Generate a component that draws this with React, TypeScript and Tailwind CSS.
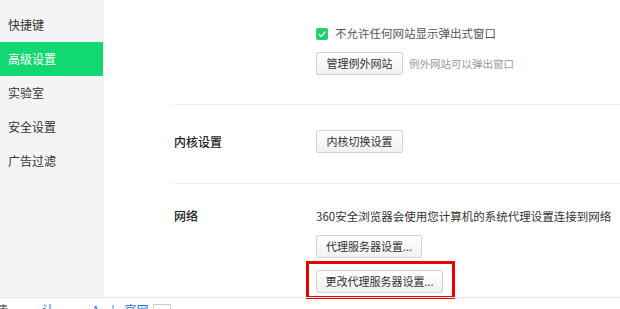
const FONT = { fontFamily: '"Microsoft YaHei", "Noto Sans CJK SC", "Noto Sans", sans-serif' };

const NAV = ["快捷键", "高级设置", "实验室", "安全设置", "广告过滤"];

function Btn({ label, w }: { label: string; w: string }) {
  return (
    <button
      className={`${w} h-[23px] shrink-0 rounded-[2px] border border-[#d3d3d3] bg-gradient-to-b from-white to-[#f1f1f1] text-center text-[11px] leading-[21px] text-[#333]`}
    >
      {label}
    </button>
  );
}

function CheckBox() {
  return (
    <span className="flex h-[12px] w-[12px] items-center justify-center rounded-[2px] bg-[#1fd26f]">
      <svg width="10" height="10" viewBox="0 0 10 10">
        <path d="M1.8 5.2 L4.2 7.4 L8.4 2.6" fill="none" stroke="#fff" strokeWidth="1.4" />
      </svg>
    </span>
  );
}

export default function App() {
  return (
    <div className="flex h-[309px] w-[620px] flex-col overflow-hidden bg-white" style={FONT}>
      <div className="flex h-[297px] shrink-0">
        {/* sidebar */}
        <div className="w-[104px] shrink-0 bg-[#f4f4f4] pt-[8px]">
          {NAV.map((item, i) => (
            <div
              key={item}
              className={
                i === 1
                  ? "mr-[1px] flex h-[34px] items-center bg-[#12d872] pl-[8px] text-[12px] text-white"
                  : "flex h-[34px] items-center pl-[8px] text-[12px] text-[#333]"
              }
            >
              {item}
            </div>
          ))}
        </div>

        {/* main */}
        <div className="flex-1 pl-[70px]">
          <div className="flex border-b border-[#eeeeee] pb-[29px] pt-[26px]">
            <div className="w-[142px] shrink-0" />
            <div className="flex flex-col">
              <div className="flex h-[16px] items-center gap-[7px]">
                <CheckBox />
                <span className="text-[11.5px] text-[#555]">不允许任何网站显示弹出式窗口</span>
              </div>
              <div className="mt-[10px] flex items-center gap-[6px]">
                <Btn label="管理例外网站" w="w-[87px]" />
                <span className="text-[10.5px] text-[#999]">例外网站可以弹出窗口</span>
              </div>
            </div>
          </div>

          <div className="flex border-b border-[#eeeeee] pb-[30px] pt-[25px]">
            <div className="flex w-[142px] shrink-0 items-center text-[12px] font-medium text-[#222]">
              内核设置
            </div>
            <Btn label="内核切换设置" w="w-[87px]" />
          </div>

          <div className="flex pt-[24px]">
            <div className="w-[142px] shrink-0 text-[12px] font-medium leading-[16px] text-[#222]">
              网络
            </div>
            <div className="flex flex-col items-start">
              <div className="whitespace-nowrap text-[11.5px] leading-[16px] text-[#333]">
                360安全浏览器会使用您计算机的系统代理设置连接到网络
              </div>
              <div className="mt-[8px]">
                <Btn label="代理服务器设置..." w="w-[106px]" />
              </div>
              <div className="-ml-[10px] mt-[3px] border-[3px] border-[#ee0000] pb-[3px] pl-[7px] pr-[9px] pt-[3px]">
                <Btn label="更改代理服务器设置..." w="w-[127px]" />
              </div>
            </div>
          </div>
        </div>
      </div>

      {/* footer row, cut off by the window edge */}
      <div className="h-[1px] shrink-0 bg-[#e6e6e6]" />
      <div className="relative h-[11px] shrink-0 overflow-hidden">
        <div className="flex items-start pt-[5px] text-[12px] leading-[14px]">
          <span className="ml-[-4px] text-[#666]">清</span>
          <span className="ml-[34px] text-[#2a6ad8]">认</span>
          <span className="ml-[38px] text-[#2a6ad8]">A</span>
          <span className="ml-[12px] text-[#2a6ad8]">|</span>
          <span className="ml-[10px] text-[#2a6ad8]">官网</span>
          <span className="ml-[4px] mt-[1px] h-[12px] w-[18px] border border-[#ccc]" />
        </div>
      </div>
    </div>
  );
}
